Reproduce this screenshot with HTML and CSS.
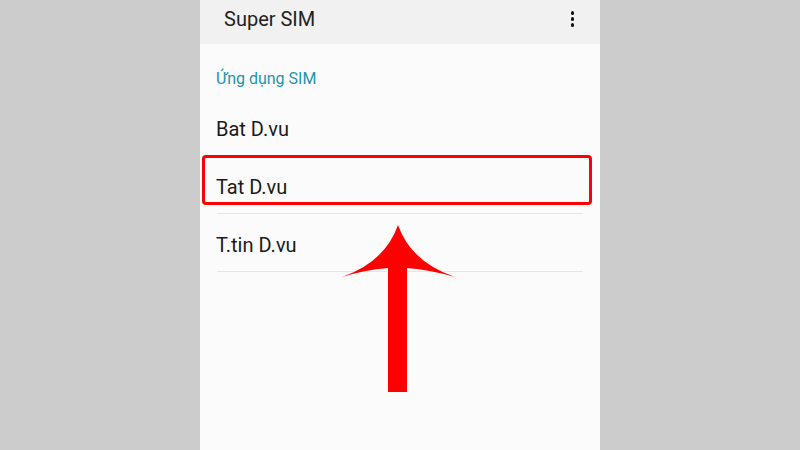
FILE: index.html
```html
<!DOCTYPE html>
<html lang="vi">
<head>
<meta charset="utf-8">
<link rel="stylesheet" href="styles.css">
</head>
<body>
<div class="phone">
  <header class="appbar">
    <span class="title">Super SIM</span>
    <span class="menu"><i></i><i></i><i></i></span>
  </header>
  <div class="section">Ứng dụng SIM</div>
  <ul class="list">
    <li class="item">Bat D.vu</li>
    <li class="item">Tat D.vu</li>
    <li class="item">T.tin D.vu</li>
  </ul>
  <div class="highlight"></div>
  <svg class="arrow" width="400" height="450" viewBox="200 0 400 450">
    <path d="M398 225 Q385 262 342 277 Q364 270 388 268 L388 392 L407 392 L407 268 Q431 270 455 277 Q411 262 398 225 Z" fill="#ff0000"/>
  </svg>
</div>
</body>
</html>
```
FILE: styles.css
```css
html, body {
  margin: 0;
  padding: 0;
  height: 100%;
}
body {
  background: #cccccc;
  font-family: Roboto, "Noto Sans", "Liberation Sans", sans-serif;
  overflow: hidden;
}
.phone {
  position: relative;
  width: 400px;
  height: 450px;
  margin: 0 auto;
  background: #fbfbfb;
}
.appbar {
  height: 44px;
  background: #f1f1f1;
  display: flex;
  align-items: center;
  justify-content: space-between;
  padding: 0 26px 6px 24px;
  box-sizing: border-box;
}
.title {
  font-size: 20px;
  color: #222;
}
.menu {
  display: flex;
  flex-direction: column;
  gap: 2.5px;
}
.menu i {
  display: block;
  width: 3.5px;
  height: 3.5px;
  border-radius: 50%;
  background: #111;
}
.section {
  height: 54px;
  box-sizing: border-box;
  padding: 25px 0 0 16px;
  font-size: 16px;
  color: #1e93ab;
}
.list {
  list-style: none;
  margin: 0;
  padding: 0 17px;
}
.item {
  height: 58px;
  box-sizing: border-box;
  padding-top: 4px;
  margin-left: 0;
  text-indent: -1px;
  display: flex;
  align-items: center;
  font-size: 20px;
  color: #1a1a1a;
  border-bottom: 1px solid #e6e6e6;
}
.highlight {
  position: absolute;
  left: 2px;
  top: 155px;
  width: 390px;
  height: 50px;
  box-sizing: border-box;
  border: 3px solid #ff0000;
  border-radius: 4px;
}
.arrow {
  position: absolute;
  left: 0;
  top: 0;
}
```
